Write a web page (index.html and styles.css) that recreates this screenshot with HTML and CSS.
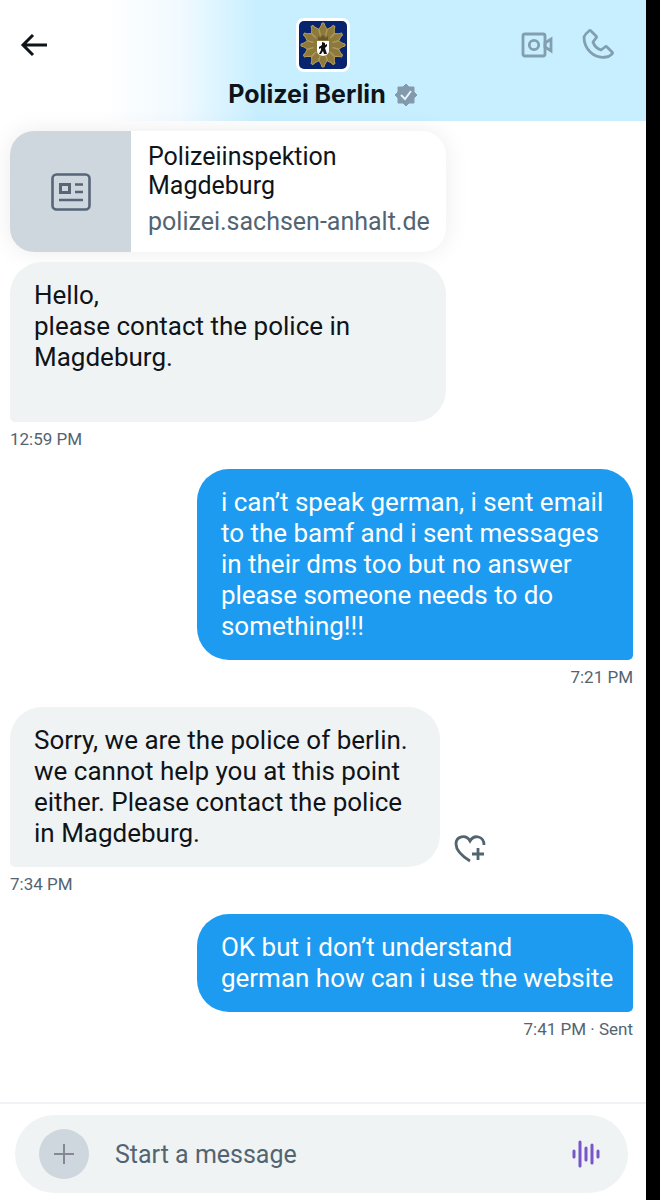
FILE: index.html
```html
<!DOCTYPE html>
<html lang="en">
<head>
    <meta charset="UTF-8">
    <meta name="viewport" content="width=device-width, initial-scale=1.0">
    <title>Polizei Berlin</title>
    <link rel="stylesheet" href="styles.css">
</head>
<body>
    <header class="topbar">
        <button type="button" class="icon-button" aria-label="Back">
            <svg width="28" height="24" viewBox="0 0 28 24" fill="none" stroke="#0f1419" stroke-width="3"><path d="M27 12H3M13 2L3 12l10 10"/></svg>
        </button>
        <div class="profile">
            <svg class="avatar" viewBox="0 0 48 48" aria-hidden="true">
                <rect width="48" height="48" fill="#08246f"/>
                <g fill="#8d793c" stroke="#b39c55" stroke-width="1">
                    <path id="ray" d="M24 24L20 8l2-3 1-3h2l1 3 2 3z"/>
                    <use href="#ray" transform="rotate(30 24 24)"/>
                    <use href="#ray" transform="rotate(60 24 24)"/>
                    <use href="#ray" transform="rotate(90 24 24)"/>
                    <use href="#ray" transform="rotate(120 24 24)"/>
                    <use href="#ray" transform="rotate(150 24 24)"/>
                    <use href="#ray" transform="rotate(180 24 24)"/>
                    <use href="#ray" transform="rotate(210 24 24)"/>
                    <use href="#ray" transform="rotate(240 24 24)"/>
                    <use href="#ray" transform="rotate(270 24 24)"/>
                    <use href="#ray" transform="rotate(300 24 24)"/>
                    <use href="#ray" transform="rotate(330 24 24)"/>
                </g>
                <circle cx="24" cy="24" r="10" fill="#8d793c"/>
                <path d="M19 15l2 2 3-3 3 3 2-2v4H19z" fill="#66572d"/>
                <path d="M18 20h12v10q0 4-6 5q-6-1-6-5z" fill="#fff"/>
                <path d="M23 21l3 1v2l2-1v2l-2 2 1 3 1 3h-3l-1-3-2 3h-2l2-4v-2l-2 1v-2l3-2z" fill="#111"/>
            </svg>
            <h1 class="name">Polizei Berlin
                <svg width="24" height="24" viewBox="0 0 24 24" role="img" aria-label="Verified"><path d="M12 1l3 3 5 0 0 5 3 3-3 3 0 5-5 0-3 3-3-3-5 0 0-5-3-3 3-3 0-5 5 0z" fill="#829aab" stroke="#829aab" stroke-linejoin="round"/><path d="M7 12l4 4 6-8" fill="none" stroke="#e4f5fd" stroke-width="2"/></svg>
            </h1>
        </div>
        <div class="calls">
            <button type="button" class="icon-button" aria-label="Video call">
                <svg width="32" height="26" viewBox="0 0 32 26" fill="none" stroke="#829fb0" stroke-width="2.8"><rect x="2" y="2" width="22" height="22" rx="2"/><circle cx="13" cy="13" r="4.7"/><path d="M24 11l6-4v12l-6-4z"/></svg>
            </button>
            <button type="button" class="icon-button" aria-label="Call">
                <svg width="32" height="34" viewBox="0 0 32 34" fill="none" stroke="#829fb0" stroke-width="2.8" stroke-linejoin="round"><path d="M7 3Q8 2 9 3l5 5q1 1 0 2l-3 4q2 6 8 8l4-3q1-1 2 0l5 5q1 1 0 2-3 3-6 3C12 31 2 21 2 9q1-3 5-6z"/></svg>
            </button>
        </div>
    </header>

    <main class="chat">
        <a class="link-card" href="https://polizei.sachsen-anhalt.de">
            <span class="thumb">
                <svg width="40" height="38" viewBox="0 0 40 38" fill="none" stroke="#576577"><rect x="1.5" y="1.5" width="37" height="35" rx="4" stroke-width="2.6"/><rect x="9.5" y="11.5" width="9" height="8" stroke-width="3"/><path d="M24 11.5h8M24 19h8M8 27h24" stroke-width="2.6"/></svg>
            </span>
            <span class="link-text">
                <span class="link-title">Polizeiinspektion<br>Magdeburg</span>
                <span class="link-domain">polizei.sachsen-anhalt.de</span>
            </span>
        </a>

        <div class="row">
            <p class="bubble">Hello,<br>please contact the police in<br>Magdeburg.<br><br></p>
        </div>
        <p class="time">12:59 PM</p>

        <div class="row sent">
            <p class="bubble">i can’t speak german, i sent email<br>to the bamf and i sent messages<br>in their dms too but no answer<br>please someone needs to do<br>something!!!</p>
        </div>
        <p class="time sent">7:21 PM</p>

        <div class="row">
            <p class="bubble narrow">Sorry, we are the police of berlin.<br>we cannot help you at this point<br>either. Please contact the police<br>in Magdeburg.</p>
            <button type="button" class="icon-button react" aria-label="Add reaction">
                <svg width="32" height="28" viewBox="0 0 32 28" fill="none" stroke="#536471" stroke-width="2.8"><path d="M16 26C8 21 2 16 2 9c0-8 10-10 14-3 4-7 14-5 14 4M24 13v12M18 19h12"/></svg>
            </button>
        </div>
        <p class="time">7:34 PM</p>

        <div class="row sent">
            <p class="bubble">OK but i don’t understand<br>german how can i use the website</p>
        </div>
        <p class="time sent">7:41 PM · Sent</p>
    </main>

    <form class="composer">
        <div class="field">
            <button type="button" class="add" aria-label="Add attachment">
                <svg width="22" height="22" viewBox="0 0 22 22" stroke="#858894" stroke-width="2"><path d="M11 1v20M1 11h20"/></svg>
            </button>
            <input type="text" class="message" placeholder="Start a message" aria-label="Start a message">
            <button type="button" class="icon-button" aria-label="Record voice message">
                <svg width="28" height="28" viewBox="0 0 28 28" stroke="#7856c8" stroke-width="3" stroke-linecap="round"><path d="M2 11v6M8 2v24M14 8v12M20 5v18M26 11v6"/></svg>
            </button>
        </div>
    </form>
</body>
</html>
```
FILE: styles.css
```css
* { box-sizing: border-box; }
body {
  margin: 0;
  min-height: 100vh;
  display: flex;
  flex-direction: column;
  border-right: 14px solid #000;
  background: #fff;
  color: #0f1419;
  font-family: Roboto, "Liberation Sans", sans-serif;
  font-size: 26px;
  line-height: 31px;
}
p, h1 { margin: 0; }
svg { display: block; }
button { border: none; background: none; padding: 0; }

.topbar {
  display: grid;
  grid-template-columns: 1fr auto 1fr;
  height: 121px;
  padding: 18px 32px 0;
  background: linear-gradient(90deg, #fff 16%, #f0faff 28%, #c8efff 40%);
}
.icon-button { display: flex; align-items: center; justify-content: center; }
.topbar .icon-button { height: 54px; }
.topbar > .icon-button { justify-self: start; margin-left: -12px; }
.profile { display: flex; flex-direction: column; align-items: center; }
.avatar { width: 54px; height: 54px; border: 3px solid #fff; border-radius: 8px; }
.name {
  display: flex;
  align-items: center;
  gap: 8px;
  margin-top: 7px;
  font-family: Inter, sans-serif;
  font-size: 25px;
  line-height: 31px;
  font-weight: 700;
}
.calls { display: flex; justify-content: flex-end; gap: 29px; }

.chat { flex: 1; padding: 10px 13px 0 10px; }
.link-card {
  display: flex;
  width: 70%;
  height: 121px;
  margin-bottom: 10px;
  border-radius: 24px;
  overflow: hidden;
  background: #fff;
  color: #0f1419;
  text-decoration: none;
  box-shadow: 0 0 24px rgba(0, 0, 0, 0.08);
}
.thumb { display: flex; align-items: center; justify-content: center; width: 121px; background: #cfd7de; }
.link-text { padding: 11px 0 0 17px; font-size: 25px; line-height: 29px; }
.link-title, .link-domain { display: block; }
.link-domain { margin-top: 7px; color: #536471; }

.row { display: flex; align-items: flex-end; }
.row.sent { justify-content: flex-end; }
.bubble {
  width: 70%;
  padding: 18px 0 18px 24px;
  border-radius: 32px 32px 32px 5px;
  background: #eff3f4;
  white-space: nowrap;
}
.bubble.narrow { width: 69%; }
.sent .bubble { background: #1d9bf0; color: #fff; border-radius: 32px 32px 5px 32px; }
.react { margin-left: 14px; margin-bottom: 4px; }
.time { margin: 5px 0 18px; font-size: 17px; line-height: 24px; color: #536471; }
.time.sent { text-align: right; }

.composer { padding: 11px 18px 7px 15px; border-top: 2px solid #eff1f4; }
.field {
  display: flex;
  align-items: center;
  height: 78px;
  padding: 0 28px 0 24px;
  border-radius: 39px;
  background: #eff3f4;
}
.add { display: flex; align-items: center; justify-content: center; width: 50px; height: 50px; border-radius: 50%; background: #cfd7de; }
.message { flex: 1; min-width: 0; margin-left: 26px; padding: 0; border: none; outline: none; background: none; font: inherit; font-size: 25px; color: #0f1419; }
.message::placeholder { color: #536471; opacity: 1; }
```
